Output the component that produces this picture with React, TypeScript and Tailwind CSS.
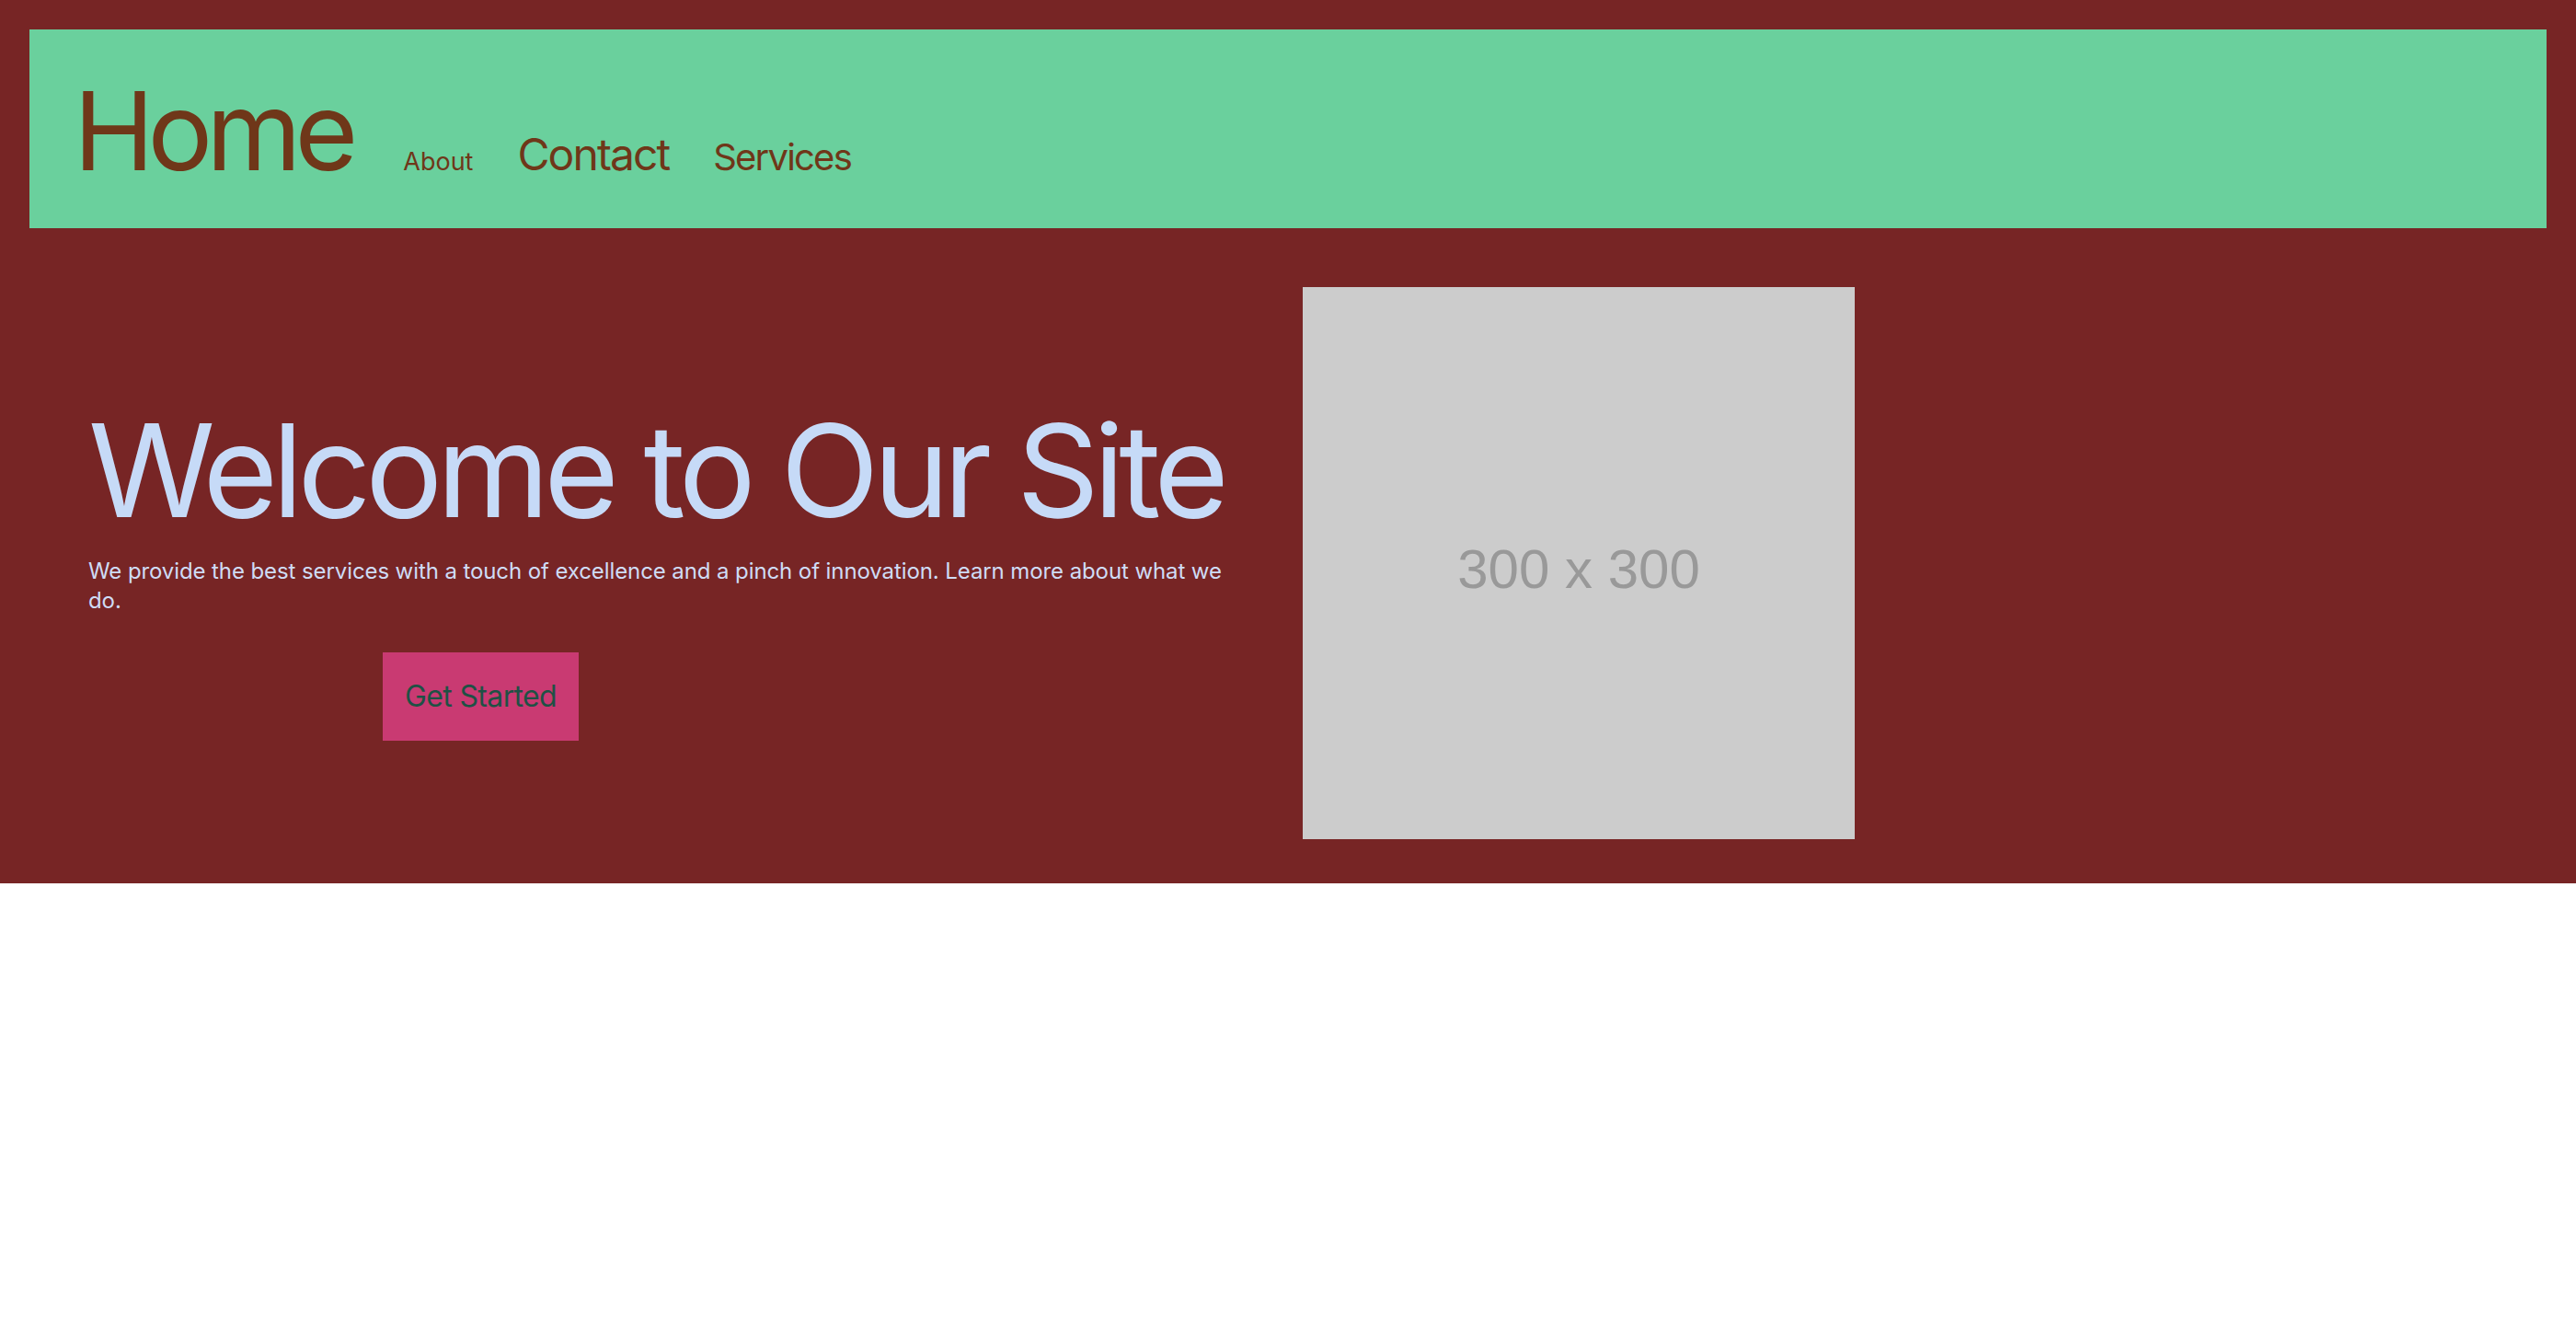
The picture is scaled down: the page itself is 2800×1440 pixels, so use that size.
import React from 'react';

const navLinks = [
  { label: 'About', cls: 'text-[27px] leading-none' },
  { label: 'Contact', cls: 'text-[48px] leading-none tracking-[-0.04em]' },
  { label: 'Services', cls: 'text-[40px] leading-none tracking-[-0.045em]' },
];

const Header = () => (
  <header className="flex items-baseline gap-12 bg-[#6ad09d] px-12 pt-[50px] pb-[46px] text-[#6f3719]">
    <a href="#" className="mr-2 text-[118px] leading-[120px] tracking-[-0.06em]">
      Home
    </a>
    {navLinks.map((link) => (
      <a key={link.label} href="#" className={link.cls}>
        {link.label}
      </a>
    ))}
  </header>
);

const Placeholder = () => (
  <div
    className="flex h-[600px] w-[600px] items-center justify-center bg-[#cccccc] pt-[13px] text-[60px] text-[#999999]"
    style={{ fontFamily: '"Liberation Sans", Arial, sans-serif' }}
  >
    300 x 300
  </div>
);

const Hero = () => (
  <section className="grid grid-cols-2 items-start gap-8 px-16 pt-16 pb-12">
    <div className="flex flex-col pt-[129px] pr-12">
      <h1 className="whitespace-nowrap text-[140px] leading-none tracking-[-0.045em] text-[#c6daf7]">
        Welcome to Our Site
      </h1>
      <p className="mt-6 text-2xl tracking-[-0.004em] text-[#cfdcf5]">
        We provide the best services with a touch of excellence and a pinch of innovation. Learn more about what we do.
      </p>
      <div className="mt-10">
        <button className="ml-80 bg-[#c93a72] px-6 py-6 text-[32px] leading-[48px] tracking-[-0.02em] text-[#1e5145]">
          Get Started
        </button>
      </div>
    </div>
    <div>
      <Placeholder />
    </div>
  </section>
);

export default function App() {
  return (
    <div className="bg-[#772525] px-8 pt-8" style={{ fontFamily: 'Inter, "Noto Sans", sans-serif' }}>
      <Header />
      <Hero />
    </div>
  );
}
